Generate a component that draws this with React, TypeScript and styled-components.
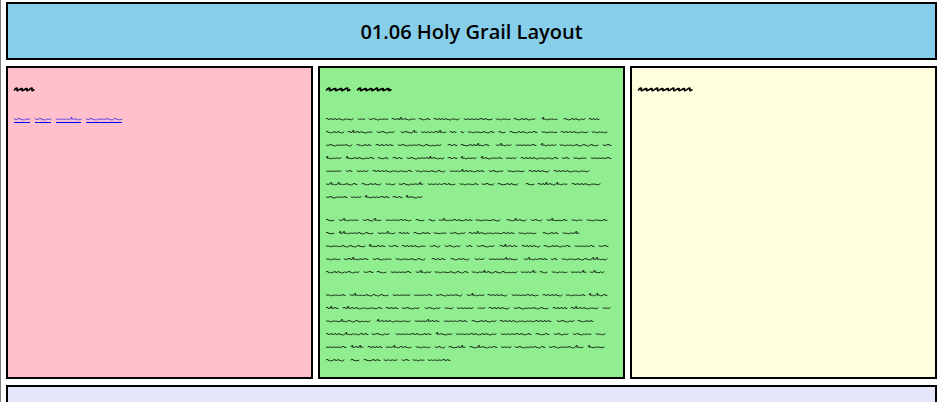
import React from "react";
import styled, { createGlobalStyle } from "styled-components";

const GlobalStyle = createGlobalStyle`
  html {
    background: #ffffff;
    border-left: 1px solid #7b7b7b;
    min-height: 100vh;
    box-sizing: border-box;
  }
  body {
    margin: 0;
    font-family: "Open Sans", "Noto Sans", sans-serif;
    color: #000000;
  }
  *, *::before, *::after { box-sizing: border-box; }
`;

const Page = styled.div`
  display: flex;
  flex-direction: column;
  gap: 6px;
  padding: 2px 4px 6px 5px;
`;

const Columns = styled.div`
  display: grid;
  grid-template-columns: repeat(3, minmax(0, 1fr));
  gap: 5px;
`;

const Panel = styled.section<{ $color: string }>`
  border: 2px solid #000000;
  background: ${(p) => p.$color};
  padding: 14px 6px 12px;
  min-width: 0;
`;

const Banner = styled(Panel)`
  padding: 14px 6px 12px;
  text-align: center;
`;

const Title = styled.h1`
  margin: 0;
  font-size: 20px;
  line-height: 28px;
  font-weight: 600;
`;

const Heading = styled.h2`
  margin: 0 0 14px;
  height: 15px;
`;

const Paragraph = styled.p`
  margin: 0 0 10px;
  overflow: hidden;

  &:last-child {
    margin-bottom: 0;
  }
`;

const Drawing = styled.svg`
  display: block;
  overflow: visible;
  fill: none;
  stroke-linecap: round;
  stroke-linejoin: round;
`;

const Links = styled.nav`
  display: flex;
  gap: 5px;
`;

const ScriptLink = styled.a`
  display: block;
  height: 12px;
  color: #0000ee;
  border-bottom: 1px solid #0000ff;
`;

const Footer = styled(Panel)`
  min-height: 58px;
`;

type Word = { start: number; end: number; tall: number[] };

// "start-end:tall,tall" where every tall value is the place of an ascender.
const parseLine = (line: string): Word[] =>
  line.split(" ").map((token) => {
    const [range, tall] = token.split(":");
    const [start, end] = range.split("-").map(Number);
    return { start, end, tall: tall ? tall.split(",").map(Number) : [] };
  });

const smallWord = ({ start, end, tall }: Word) => {
  const count = Math.max(2, Math.round((end - start) / 3.8));
  const step = (end - start) / count;
  let d = `M${start} 7.8`;
  for (let i = 0; i < count; i += 1) {
    const x = start + i * step;
    const nearTall = tall.some((t) => t >= x - 0.2 && t < x + step - 0.2);
    const kind = (start * 3 + i * i + (i >> 1) + end) % 5;
    if (nearTall) {
      d += ` L${x + 0.8} 6.5 l.9 0 l-.5 1.7 L${x + step} 8.2`;
    } else if (kind < 2) {
      d += ` q${step * 0.2} .9 ${step * 0.5} .4 l${step * 0.05} .3 L${x + step} 7.8`;
    } else if (kind < 4) {
      d += ` L${x + step * 0.5} 7.4 l${step * 0.1} 1 L${x + step} 8.4`;
    } else {
      d += ` q${step * 0.3} .9 ${step * 0.5} .3 L${x + step} 8.2`;
    }
  }
  return d;
};

// A slanted pen wave: a rising hairline followed by a short downstroke.
const boldWord = (start: number, end: number) => {
  const count = Math.max(3, Math.round((end - start) / 5.6));
  const step = (end - start) / count;
  let d = `M${start + 0.5} 8`;
  for (let i = 0; i < count; i += 1) {
    const x = start + i * step;
    const lift = i % 3 === 0 ? 0.5 : 0;
    d += ` C${x + step * 0.3} ${7 - lift} ${x + step * 0.6} ${6 - lift} ${x + step * 0.65} ${6.9 - lift}`;
    d += ` C${x + step * 0.45} 8.8 ${x + step * 0.6} 9.2 ${x + step} 7.8`;
  }
  return d;
};

const ScriptLine = ({ line }: { line: string }) => {
  const words = parseLine(line);
  return (
    <Drawing
      aria-hidden="true"
      width={words[words.length - 1].end}
      height="13"
      stroke="#000000"
      strokeWidth=".8"
    >
      {words.map((word) => (
        <path key={word.start} d={smallWord(word)} />
      ))}
    </Drawing>
  );
};

const ScriptHeading = ({ words }: { words: [number, number][] }) => (
  <Heading>
    <Drawing
      aria-hidden="true"
      width={words[words.length - 1][1]}
      height="15"
      stroke="#000000"
      strokeWidth="1.6"
    >
      {words.map(([start, end]) => (
        <path key={start} d={boldWord(start, end)} />
      ))}
    </Drawing>
  </Heading>
);

const links = [
  { label: "First", width: 16, tall: [] },
  { label: "Second", width: 16, tall: [] },
  { label: "Third", width: 25, tall: [17] },
  { label: "Fourth", width: 36, tall: [] },
];

const paragraphs = [
  [
    "0-27 32-39 43-62 66-89:74 93-104 108-133 138-166 170-184 188-209 216-231:216 238-259 263-273",
    "0-18 22-46:27 51-68 75-91:88 95-120:113 124-130 135-138 142-168 173-179 184-211 216-231 235-262 266-281",
    "0-26 31-45 50-67 72-115 122-131 135-163:151 170-185:177 190-210 215-230:215 234-272 277-285",
    "0-15:0 20-48:20 52-62 67-76 81-118:104 122-131 135-150:135 155-176:155 180-190 195-232 236-243 248-260 265-285",
    "0-15 20-26 31-42 47-86 90-119 124-158:137 163-177 182-198 203-223 228-263",
    "0-31:6,15 36-55 60-69 73-97:93 102-129 134-152 156-168 172-192 200-208 212-241:222,230 246-274",
    "0-21 25-35 39-63:39 67-76 80-96:80",
  ],
  [
    "0-8 13-32:17 37-55:48 60-85 90-98 103-109 113-146:118 150-174 181-200:192 205-216 221-241:226 246-256 261-281",
    "0-8 13-47:13,20 52-69:63 73-83 88-104 108-120 124-139 143-188:152 193-210 217-232 237-253:250",
    "0-39 43-59:43 63-72 76-99 104-114 119-134 140-146 151-168 174-191:179 196-214 218-244 249-268 273-282",
    "0-14 18-42:28 47-65 70-99 106-119 125-143 149-158 163-191:180 198-221:203 225-231 236-281:267,272",
    "0-33 38-47 51-60 65-85 90-105:97 109-142 146-191:160 195-210:207 214-221 226-241 245-260:257 264-278:268",
  ],
  [
    "0-19 24-62:29 67-84 88-106 110-136 141-158:146 162-181 186-212 217-236 240-259 263-281:263,272",
    "0-12:4 17-56:22 60-72 76-93 99-114 119-127 131-147 152-159 163-183 188-222 227-241 245-272:251 277-284",
    "0-44:16 51-84:51 89-113:104 118-141 146-170 174-225 231-248 252-267",
    "0-42:20 46-63 70-105 110-126:110 130-170 175-205 210-223 228-242 247-265 270-279",
    "0-20 25-37:25,34 42-56 60-85:68 90-104 109-119 123-139:136 144-171:152 175-185 189-219 223-257:253 262-278:262",
    "0-18 25-33 38-54 58-71 76-83 87-98 102-124",
  ],
];

export default function App() {
  return (
    <>
      <GlobalStyle />
      <Page>
        <Banner as="header" $color="#87ceeb">
          <Title>01.06 Holy Grail Layout</Title>
        </Banner>
        <Columns>
          <Panel as="div" $color="#ffc0cb">
            <ScriptHeading words={[[0, 20]]} />
            <Links>
              {links.map(({ label, width, tall }) => (
                <ScriptLink key={label} href="#" aria-label={label}>
                  <Drawing
                    aria-hidden="true"
                    width={width}
                    height="11"
                    stroke="currentColor"
                    strokeWidth=".6"
                  >
                    <path d={smallWord({ start: 0, end: width, tall })} />
                  </Drawing>
                </ScriptLink>
              ))}
            </Links>
          </Panel>
          <Panel as="main" $color="#90ee90">
            <ScriptHeading words={[[0, 24], [31, 65]]} />
            {paragraphs.map((lines) => (
              <Paragraph key={lines[0]}>
                {lines.map((line) => (
                  <ScriptLine key={line} line={line} />
                ))}
              </Paragraph>
            ))}
          </Panel>
          <Panel as="aside" $color="#ffffe0">
            <ScriptHeading words={[[0, 54]]} />
          </Panel>
        </Columns>
        <Footer as="footer" $color="#e6e6fa" />
      </Page>
    </>
  );
}
